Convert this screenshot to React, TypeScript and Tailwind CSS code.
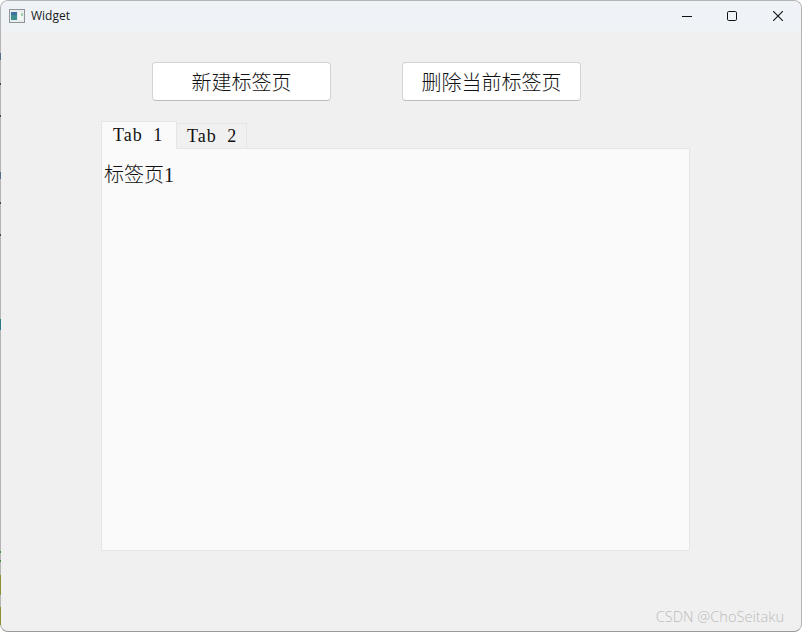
const CJK = "font-['Noto_Sans_CJK_SC','Liberation_Serif',serif]";
const BODY = "font-['Liberation_Serif','Noto_Sans_CJK_SC',serif]";

// bits of the desktop that show along the window's left edge
const EDGE_MARKS = [
  "top-[53px] h-[7px] bg-[#5a6a8a]",
  "top-[83px] h-[2px] bg-[#444444]",
  "top-[115px] h-[2px] bg-[#444444]",
  "top-[172px] h-[7px] bg-[#5a6a8a]",
  "top-[202px] h-[2px] bg-[#444444]",
  "top-[234px] h-[2px] bg-[#444444]",
  "top-[319px] h-[11px] bg-[#2a7a8a]",
  "top-[551px] h-[2px] bg-[#3f8f3f]",
  "top-[560px] h-[2px] bg-[#3f8f3f]",
  "top-[575px] h-[20px] bg-[#8f8f3a]",
  "top-[607px] h-[18px] bg-[#8f8f3a]",
];

function WidgetIcon() {
  return (
    <svg width="16" height="14" viewBox="0 0 16 14" className="shrink-0">
      <rect x="0.5" y="0.5" width="15" height="13" fill="#e8ecec" stroke="#8e9498" />
      <rect x="2" y="3" width="6" height="8" fill="#3f8f8f" />
      <rect x="2" y="3" width="6" height="3" fill="#3d6f9f" />
      <rect x="9" y="3" width="5" height="8" fill="#f4f6f4" />
      <rect x="12" y="4" width="2" height="3" fill="#9fd0b0" />
    </svg>
  );
}

function TitleBar() {
  return (
    <div className="flex h-[30px] shrink-0 items-center bg-[#eff3f7] pl-2">
      <WidgetIcon />
      <span className="ml-[6px] font-['Segoe_UI','Open_Sans','Liberation_Sans',sans-serif] text-[12px] text-[#1a1a1a]">
        Widget
      </span>
      <div className="ml-auto flex items-center text-[#111111]">
        <button className="flex h-[30px] w-[46px] items-center justify-center pl-[2px]">
          <svg width="10" height="10" viewBox="0 0 10 10">
            <path d="M0 5.5H10" stroke="currentColor" fill="none" />
          </svg>
        </button>
        <button className="flex h-[30px] w-[46px] items-center justify-center">
          <svg width="10" height="10" viewBox="0 0 10 10">
            <rect x="0.5" y="0.5" width="9" height="9" rx="1.2" stroke="currentColor" fill="none" />
          </svg>
        </button>
        <button className="flex h-[30px] w-[46px] items-center justify-center">
          <svg width="10" height="10" viewBox="0 0 10 10">
            <path d="M0 0L10 10M10 0L0 10" stroke="currentColor" strokeWidth="1.1" fill="none" />
          </svg>
        </button>
      </div>
    </div>
  );
}

function ActionButton({ label }: { label: string }) {
  return (
    <button
      className={`flex h-[39px] w-[179px] items-center justify-center rounded-[4px] border border-[#d3d3d3] border-b-[#bdbdbd] bg-white text-[20px] font-light text-[#111111] ${CJK}`}
    >
      {label}
    </button>
  );
}

export default function App() {
  return (
    <div className="relative h-[632px] w-[802px] overflow-hidden bg-white">
      <div className="flex h-full w-full flex-col overflow-hidden rounded-[8px] border border-[#b4b4b4] border-b-[#9a9a9a] bg-[#f0f0f0]">
        <TitleBar />

        {/* Buttons */}
        <div className="mt-[31px] flex gap-[71px] pl-[151px]">
          <ActionButton label="新建标签页" />
          <ActionButton label="删除当前标签页" />
        </div>

        {/* Tab widget */}
        <div className="ml-[100px] mt-[20px] w-[589px]">
          <div className="relative z-10 flex h-[28px] items-end">
            <div
              className={`flex h-[28px] w-[76px] items-center border border-b-0 border-[#e5e5e5] bg-[#fafafa] pl-[11px] text-[18px] tracking-[1px] text-[#111111] [word-spacing:5px] ${BODY}`}
            >
              Tab 1
            </div>
            <div
              className={`flex h-[26px] w-[70px] items-center border border-l-0 border-[#e5e5e5] bg-[#f0f0f0] pl-[10px] text-[18px] tracking-[1px] text-[#111111] [word-spacing:5px] ${BODY}`}
            >
              Tab 2
            </div>
          </div>
          <div
            className={`-mt-px h-[403px] border border-[#e5e5e5] bg-[#fafafa] pl-[2px] pt-[12px] text-[20px] font-light leading-[28px] text-[#111111] ${BODY}`}
          >
            标签页1
          </div>
        </div>
      </div>

      {/* Watermark */}
      <span className="absolute bottom-[7px] right-[18px] font-['Open_Sans','Liberation_Sans',sans-serif] text-[14.6px] font-light leading-[18px] text-[#bcbcbc]">
        CSDN @ChoSeitaku
      </span>

      {EDGE_MARKS.map((mark) => (
        <span key={mark} className={`absolute left-0 w-px ${mark}`} />
      ))}
    </div>
  );
}
